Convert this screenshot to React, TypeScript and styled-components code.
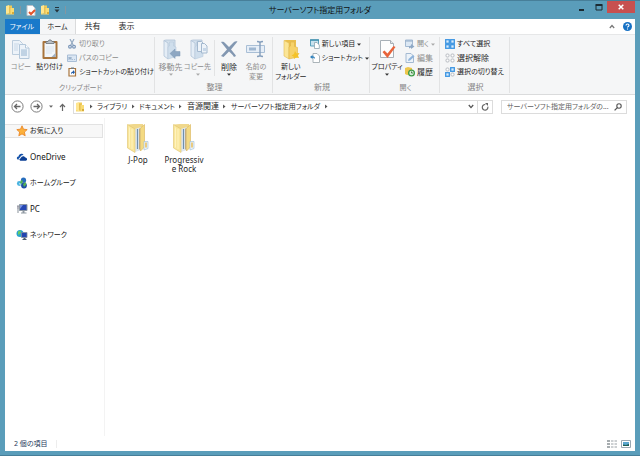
import React from "react";
import styled, { createGlobalStyle } from "styled-components";

const GlobalStyle = createGlobalStyle`
  * { box-sizing: border-box; }
  html, body, #root { height: 100%; }
  body {
    margin: 0;
    font-family: "Noto Sans", "Noto Sans CJK JP", sans-serif;
    font-size: 7px;
    line-height: 10px;
    color: #1f1f1f;
    font-feature-settings: "palt";
  }
  button, input { font: inherit; font-feature-settings: inherit; color: inherit; }
  button { border: 0; padding: 0; background: none; white-space: nowrap; }
  svg { display: block; flex: none; }
`;

const Frame = styled.div`
  display: flex;
  flex-direction: column;
  min-height: 100%;
  padding: 0 5px 4px;
  background: #5a9dba;
  border: 1px solid #477f99;
  border-width: 1px 0;
`;
const TitleBar = styled.header`
  display: grid;
  grid-template-columns: 1fr auto 1fr;
  align-items: start;
  height: 18px;
`;
const QuickAccess = styled.div`
  display: flex;
  align-items: center;
  gap: 4px;
  height: 18px;
`;
const QuickLine = styled.span`
  width: 1px;
  height: 8px;
  margin: 0 1px;
  background: #8496a0;
`;
const Title = styled.h1`
  margin: 0;
  font-size: 8px;
  line-height: 18px;
  font-weight: 400;
  color: #111;
`;
const WindowButtons = styled.div`
  display: flex;
  justify-content: flex-end;
`;
const WindowButton = styled.button<{ $close?: boolean }>`
  display: grid;
  place-items: center;
  width: ${(p) => (p.$close ? 28 : 17)}px;
  height: 12px;
  background: ${(p) => (p.$close ? "#c75050" : "transparent")};
`;
const Client = styled.div`
  display: flex;
  flex-direction: column;
  flex: 1;
  background: #fff;
`;
const TabRow = styled.nav`
  display: flex;
  align-items: stretch;
  height: 15px;
`;
const Tab = styled.button<{ $kind?: "file" | "active" }>`
  width: ${(p) => (p.$kind === "file" ? 35 : p.$kind === "active" ? 36 : 34)}px;
  color: ${(p) => (p.$kind === "file" ? "#fff" : "#1f1f1f")};
  background: ${(p) => (p.$kind === "file" ? "#1979ca" : p.$kind === "active" ? "#f5f6f7" : "#fff")};
  border-right: 1px solid ${(p) => (p.$kind === "active" ? "#dadbdc" : "transparent")};
`;
const TabTools = styled.div`
  display: flex;
  align-items: center;
  gap: 8px;
  margin-left: auto;
  padding-right: 3px;
`;
const Ribbon = styled.section`
  display: flex;
  height: 61px;
  padding: 2px 0 1px;
  background: #f5f6f7;
  border-top: 1px solid #e6e7e8;
  border-bottom: 1px solid #dadbdc;
`;
const GroupBox = styled.div<{ $width: number }>`
  display: flex;
  flex-direction: column;
  justify-content: space-between;
  width: ${(p) => p.$width}px;
  padding-left: 2px;
  border-right: 1px solid #e2e3e4;
`;
const GroupBody = styled.div`
  display: flex;
  align-items: flex-start;
`;
const GroupName = styled.div`
  text-align: center;
  color: #858585;
`;
const Label = styled.span<{ $kana: boolean }>`
  font-size: ${(p) => (p.$kana ? 7 : 8)}px;
`;
const BigButton = styled.button<{ $width: number; $off?: boolean }>`
  display: flex;
  flex-direction: column;
  align-items: center;
  gap: 1px;
  width: ${(p) => p.$width}px;
  padding-top: 2px;
  color: ${(p) => (p.$off ? "#8c8c8c" : "#1f1f1f")};
  white-space: pre;
`;
const InnerLine = styled.span`
  width: 1px;
  height: 36px;
  margin: 3px 0 0 3px;
  background: #e2e3e4;
`;
const SmallColumn = styled.div`
  display: flex;
  flex-direction: column;
  gap: 4px;
  padding: 2px 0 0 3px;
`;
const SmallButton = styled.button<{ $off?: boolean }>`
  display: flex;
  align-items: center;
  gap: 2px;
  height: 10px;
  color: ${(p) => (p.$off ? "#8c8c8c" : "#1f1f1f")};
`;
const AddressRow = styled.div`
  display: flex;
  align-items: center;
  height: 23px;
  padding: 0 8px 0 6px;
`;
const NavButtons = styled.div`
  display: flex;
  align-items: center;
  gap: 6px;
  width: 62px;
`;
const AddressBar = styled.div`
  display: flex;
  align-items: center;
  flex: 1;
  height: 14px;
  padding-left: 1px;
  border: 1px solid #dcdcdc;
`;
const Crumbs = styled.ol`
  display: flex;
  align-items: center;
  flex: 1;
  margin: 0;
  padding: 0;
  list-style: none;
`;
const Crumb = styled.li`
  display: flex;
  align-items: center;
`;
const CrumbArrow = styled.span`
  display: grid;
  place-items: center;
  width: 12px;
`;
const BarButton = styled.button<{ $line?: boolean }>`
  display: grid;
  place-items: center;
  width: ${(p) => (p.$line ? 15 : 12)}px;
  height: 12px;
  border-left: ${(p) => (p.$line ? "1px solid #dcdcdc" : "0")};
`;
const Search = styled.label`
  display: flex;
  align-items: center;
  width: 126px;
  height: 14px;
  margin-left: 8px;
  padding: 0 4px 0 5px;
  border: 1px solid #dcdcdc;
`;
const SearchInput = styled.input`
  flex: 1;
  min-width: 0;
  padding: 0;
  border: 0;
  outline: 0;
  background: none;
  &::placeholder { color: #606060; opacity: 1; }
`;
const Main = styled.div`
  display: flex;
  flex: 1;
`;
const Sidebar = styled.nav`
  display: flex;
  flex-direction: column;
  gap: 12px;
  width: 100px;
  padding: 6px 1px 0 0;
  border-right: 1px solid #f3f3f3;
`;
const Place = styled.a<{ $current?: boolean }>`
  display: flex;
  align-items: center;
  gap: 2px;
  height: 14px;
  padding-left: 11px;
  color: #141414;
  text-decoration: none;
  background: ${(p) => (p.$current ? "#f7f7f7" : "transparent")};
  border: 1px solid ${(p) => (p.$current ? "#e2e2e2" : "transparent")};
  border-left: 0;
`;
const Files = styled.main`
  display: flex;
  flex: 1;
  align-items: flex-start;
  gap: 6px;
  padding: 5px 13px;
`;
const FileItem = styled.button`
  display: flex;
  flex-direction: column;
  align-items: center;
  gap: 1px;
  width: 40px;
  font-size: 8px;
  line-height: 9px;
  white-space: normal;
  word-break: break-all;
`;
const StatusBar = styled.footer`
  display: flex;
  align-items: center;
  height: 15px;
  padding: 0 4px 0 9px;
  color: #1e395b;
`;
const StatusLine = styled.span`
  width: 1px;
  height: 8px;
  margin-left: 8px;
  background: #ededed;
`;
const ViewButtons = styled.div`
  display: flex;
  gap: 4px;
  margin-left: auto;
`;

const MiniFolder = () => (
  <svg width="10" height="10" viewBox="0 0 10 10" aria-hidden>
    <path d="M1 1l3-1v8l-3 1z" fill="#ffe690" />
    <path d="M4 0.5h3v8H4z" fill="#f0ca58" />
    <path d="M5 3h4v6.500H1V8l4 .5z" fill="#f9dc74" />
    <path d="M5 2v7" stroke="#d9b04a" strokeWidth=".7" />
    <path d="M7 7h2v2H7z" fill="#d7ab3d" />
  </svg>
);
const DocCheck = () => (
  <svg width="10" height="11" viewBox="0 0 10 11" aria-hidden>
    <path d="M1 .5h5.500L9 3v7.500H1z" fill="#fff" stroke="#b8c0c8" />
    <path d="M3 7l2 2 4-4" fill="none" stroke="#e2542c" strokeWidth="2" />
  </svg>
);
const Caret = ({ color = "#333" }: { color?: string }) => (
  <svg width="4" height="3" viewBox="0 0 4 3" aria-hidden>
    <path d="M0 .5h4L2 2.800z" fill={color} />
  </svg>
);
const QuickMenu = () => (
  <svg width="6" height="6" viewBox="0 0 6 6" aria-hidden>
    <path d="M1 .5h4" stroke="#25343c" />
    <path d="M.5 2.500h5L3 5.500z" fill="#25343c" />
  </svg>
);
const MinimizeIcon = () => (
  <svg width="7" height="7" viewBox="0 0 7 7" aria-hidden><path d="M1 6h5" stroke="#1b2a32" strokeWidth="2" /></svg>
);
const MaximizeIcon = () => (
  <svg width="8" height="7" viewBox="0 0 8 7" aria-hidden>
    <path d="M1 1.500h6v4.500H1z" fill="none" stroke="#1b2a32" /><path d="M.5 1h7" stroke="#1b2a32" strokeWidth="2" />
  </svg>
);
const CloseIcon = () => (
  <svg width="6" height="6" viewBox="0 0 6 6" aria-hidden><path d="M.7.7l4.600 4.600M5.300.7L.7 5.300" stroke="#fff" strokeWidth="1.500" /></svg>
);
const HelpIcon = () => (
  <svg width="9" height="9" viewBox="0 0 9 9" aria-hidden>
    <circle cx="4.500" cy="4.500" r="4.500" fill="#1671c4" />
    <path d="M3 3.500c0-2 3-2 3 0 0 1-1.500 1-1.500 2.100M4.500 6.500v1.100" fill="none" stroke="#fff" strokeWidth="1.100" />
  </svg>
);
const ChevronUp = () => (
  <svg width="6" height="5" viewBox="0 0 6 5" aria-hidden><path d="M.8 4L3 1.500 5.200 4" fill="none" stroke="#777" strokeWidth="1.200" /></svg>
);
const CopyIcon = () => (
  <svg width="20" height="22" viewBox="0 0 20 22" aria-hidden>
    <path d="M1.500 1.500h7l3 3v11h-10z" fill="#edf3f9" stroke="#bccddd" />
    <path d="M3 5h5M3 7h4M3 9h4M3 11h4" stroke="#c9d8e7" />
    <path d="M8.500 5.500h6l3.500 3.500v10.500H8.500z" fill="#edf3f9" stroke="#b3c7da" />
    <path d="M14.500 5.500V9H18" fill="#fff" stroke="#b3c7da" />
    <path d="M10 10h6v7h-6z" fill="#cbdbea" />
    <path d="M10 12h6M10 14h6M10 16h6" stroke="#b5cade" />
  </svg>
);
const PasteIcon = () => (
  <svg width="18" height="22" viewBox="0 0 18 22" aria-hidden>
    <rect x="1.500" y="2" width="15" height="18" rx="1" fill="#a8743c" />
    <path d="M3.500 4h11v14h-11z" fill="#f2f6fa" />
    <path d="M5 8h8M5 10h8M5 12h8M5 14h6" stroke="#dce5ee" />
    <path d="M14.500 14v4h-4z" fill="#9eb0c4" />
    <path d="M5 4.500V2.500h2l1-1.500h2l1 1.500h2v2z" fill="#b9c0c7" stroke="#6c747b" strokeWidth=".8" />
  </svg>
);
const CutIcon = () => (
  <svg width="10" height="10" viewBox="0 0 10 10" aria-hidden>
    <path d="M3 0l3.400 6.500M7 0L3.600 6.500" stroke="#93a9c1" strokeWidth="1.200" />
    <circle cx="3" cy="7.800" r="1.400" fill="none" stroke="#7c98ba" strokeWidth="1.200" />
    <circle cx="7" cy="7.800" r="1.400" fill="none" stroke="#7c98ba" strokeWidth="1.200" />
  </svg>
);
const PathIcon = () => (
  <svg width="10" height="10" viewBox="0 0 10 10" aria-hidden>
    <path d="M.5 2h9v6.500h-9z" fill="#dae6f3" stroke="#a9bed6" />
    <path d="M2 7V4l1 2 1-2v3M5.500 7v-.8M7.500 7v-.8" fill="none" stroke="#8da6c2" strokeWidth=".8" />
  </svg>
);
const ShortcutPasteIcon = () => (
  <svg width="10" height="10" viewBox="0 0 10 10" aria-hidden>
    <path d="M2 1.500h6.500V9H2z" fill="#fff" stroke="#a8743c" strokeWidth="1.200" />
    <path d="M4 .5h3v1.500H4z" fill="#737b82" />
    <path d="M4 7.500c0-2 .5-3 2-3V3l2 2.200-2 2V6C5 6 4.500 6.500 4 7.500z" fill="#1e5ba8" />
  </svg>
);
const PaleFolder = ({ kind }: { kind: "move" | "copy" }) => (
  <svg width="20" height="22" viewBox="0 0 20 22" aria-hidden>
    <path d="M3 1.500L5 1h9v15H7z" fill="#d2dfec" stroke="#b0c3d7" strokeWidth=".8" />
    <path d="M3 1.500L7 4v16l-4-3z" fill="#e4edf6" stroke="#b0c3d7" strokeWidth=".8" />
    <path d="M7 8l1.500-1V3h4v4l2.500 1v9.500L7 20z" fill="#cfdeec" stroke="#b9cbdd" strokeWidth=".6" />
    {kind === "move" ? (
      <path d="M9 14.500l5-4.500v2.500h5v4.500h-5v2.500z" fill="#8ea7c2" stroke="#7e98b5" strokeWidth=".5" />
    ) : (
      <>
        <path d="M9.500 2.500h4l2 2v8h-6z" fill="#edf3f9" stroke="#a4b9cf" />
        <path d="M13.500 4.500h3l2.500 2.500v7h-5.500z" fill="#edf3f9" stroke="#a4b9cf" />
        <path d="M15 9h3v3h-3z" fill="#c7d7e8" />
      </>
    )}
  </svg>
);
const DeleteIcon = () => (
  <svg width="20" height="22" viewBox="0 0 20 22" aria-hidden>
    <path d="M2 3c2-.5 3 0 4 1l4 4 5-5c1-.8 2-1 3.500-.6L12 10.500c2.500 3 4 4.500 5 6.500l-2 1c-1.500-2.500-3-4-5-5.500L4.500 18 2 17l6-6.500C6 8 4 5.500 2 3z" fill="#8297b1" />
  </svg>
);
const RenameIcon = () => (
  <svg width="20" height="22" viewBox="0 0 20 22" aria-hidden>
    <path d="M.5 6.500h18v7H.5z" fill="#e6eef7" stroke="#a9bfd6" />
    <path d="M3 8.500h7v3H3z" fill="#9fb7d1" />
    <path d="M11 2.500c2 0 2.500.3 3 1 .5-.7 1-1 3-1M11 17.500c2 0 2.500-.3 3-1 .5.7 1 1 3 1M14 3.500v13" fill="none" stroke="#859fbd" strokeWidth="1.400" />
  </svg>
);
const NewFolderIcon = () => (
  <svg width="20" height="22" viewBox="0 0 20 22" aria-hidden>
    <path d="M3 1.500L5 1h10v16H8z" fill="#eabf4e" />
    <path d="M3 1.500L8 4v16l-5-3z" fill="#fbe596" stroke="#e2bd56" strokeWidth=".6" />
    <path d="M8 8l1.500-1V3h4v4.500l3 1V18L8 20z" fill="#f6d269" stroke="#dfb346" strokeWidth=".6" />
    <path d="M14 12l1.500 2.500 3-.5-1.500 2.500 1 2.500-3-.5-2 1.500-.5-2.500-2-1 2.500-1.500z" fill="#f3c229" />
  </svg>
);
const NewItemIcon = () => (
  <svg width="10" height="10" viewBox="0 0 10 10" aria-hidden>
    <path d="M.5 1h8v6h-8z" fill="#c8e2ee" stroke="#5aa1bd" />
    <path d="M0 1h9" stroke="#3d8fad" strokeWidth="1.400" />
    <path d="M4.500 3.500H7L9.300 6v3.500H4.500z" fill="#fff" stroke="#8da3ae" strokeWidth=".8" />
  </svg>
);
const NewShortcutIcon = () => (
  <svg width="10" height="10" viewBox="0 0 10 10" aria-hidden>
    <path d="M3 .5h4L9.500 3v6.500H3z" fill="#fff" stroke="#98a3aa" strokeWidth=".8" />
    <path d="M0 4l2.500-2v1.200C4.500 3.200 5 4.500 5 6c-.6-.8-1.200-1.200-2.500-1.200V6z" fill="#2c81be" />
  </svg>
);
const PropertiesIcon = () => (
  <svg width="20" height="22" viewBox="0 0 20 22" aria-hidden>
    <path d="M3.500 1.500h10l3 3v14h-13z" fill="#fdfdfd" stroke="#a8b0b7" />
    <path d="M13.500 1.500v3h3" fill="#e6eaed" stroke="#a8b0b7" />
    <path d="M5.500 13l2-1.500 3 3L16.500 7l2 1-8 11z" fill="#e8643b" />
  </svg>
);
const OpenIcon = () => (
  <svg width="10" height="10" viewBox="0 0 10 10" aria-hidden>
    <path d="M.5 1h7v6.500h-7z" fill="#dce8f4" stroke="#a4bad2" />
    <path d="M.5 2h7" stroke="#8fa9c6" />
    <path d="M4 9.500V7.500l2-1V5l3.500 2.500L6 10V8.500z" fill="#8fa9c6" />
  </svg>
);
const EditIcon = () => (
  <svg width="10" height="10" viewBox="0 0 10 10" aria-hidden>
    <path d="M1 .5h5L8.500 3v6.500H1z" fill="#edf3f9" stroke="#a4bad2" />
    <path d="M3 8l.5-2L8 2l1.500 1.500-4.500 4z" fill="#8fb4db" />
  </svg>
);
const HistoryIcon = () => (
  <svg width="10" height="10" viewBox="0 0 10 10" aria-hidden>
    <path d="M0 1l3-1 4 1v6L2 8 0 7z" fill="#edc64c" />
    <circle cx="6.500" cy="6" r="3.500" fill="#3c9b46" />
    <circle cx="6.500" cy="6" r="2.200" fill="#d9efdb" />
    <path d="M6.500 4.500V6H8" fill="none" stroke="#28662e" strokeWidth=".8" />
  </svg>
);
const GridIcon = ({ fills }: { fills: boolean[] }) => (
  <svg width="10" height="10" viewBox="0 0 10 10" aria-hidden>
    {fills.map((on, i) => {
      const x = (i % 2) * 5;
      const y = Math.floor(i / 2) * 5;
      return on ? (
        <rect key={i} x={x + 0.7} y={y + 0.7} width="3.600" height="3.600" fill="#d8ecfd" stroke="#3d95e2" strokeWidth="1.300" />
      ) : (
        <rect key={i} x={x + 1} y={y + 1} width="3" height="3" rx="1" fill="#fff" stroke="#a9afb5" strokeWidth=".8" />
      );
    })}
  </svg>
);
const RoundArrow = ({ flip }: { flip?: boolean }) => (
  <svg width="13" height="13" viewBox="0 0 13 13" aria-hidden>
    <circle cx="6.500" cy="6.500" r="5.600" fill="#fff" stroke="#7c7c7c" />
    <path d={flip ? "M3.500 6.500h6M7 4l2.500 2.500L7 9" : "M9.500 6.500h-6M6 4L3.500 6.500 6 9"} fill="none" stroke="#666" strokeWidth="1.300" />
  </svg>
);
const UpArrow = () => (
  <svg width="7" height="8" viewBox="0 0 7 8" aria-hidden><path d="M3.500 8V1.500M1 4l2.500-2.700L6 4" fill="none" stroke="#666" strokeWidth="1.200" /></svg>
);
const RightArrow = () => (
  <svg width="3" height="5" viewBox="0 0 3 5" aria-hidden><path d="M0 .5v4l2.500-2z" fill="#555" /></svg>
);
const ChevronDown = () => (
  <svg width="6" height="5" viewBox="0 0 6 5" aria-hidden><path d="M.8 1L3 3.600 5.200 1" fill="none" stroke="#555" strokeWidth="1.300" /></svg>
);
const RefreshIcon = () => (
  <svg width="8" height="8" viewBox="0 0 8 8" aria-hidden>
    <path d="M6.800 3.600A2.800 2.800 0 1 1 4.300 1.500" fill="none" stroke="#666" strokeWidth="1.200" />
    <path d="M4 0h3v3z" fill="#666" />
  </svg>
);
const SearchIcon = () => (
  <svg width="8" height="8" viewBox="0 0 8 8" aria-hidden>
    <circle cx="5" cy="3" r="2.200" fill="none" stroke="#555" strokeWidth="1.100" /><path d="M3.400 4.600L.6 7.400" stroke="#555" strokeWidth="1.300" />
  </svg>
);
const StarIcon = () => (
  <svg width="12" height="12" viewBox="0 0 12 12" aria-hidden>
    <path d="M6 .8l1.500 3.400 3.700.4-2.800 2.500.8 3.700L6 8.900l-3.200 1.900.8-3.700L.8 4.600l3.700-.4z" fill="#fbb03b" stroke="#e97f1d" strokeWidth=".8" />
  </svg>
);
const CloudIcon = () => (
  <svg width="12" height="12" viewBox="0 0 12 12" aria-hidden>
    <path d="M1.500 8.500C.2 7 1 5.500 2.500 5.500 3 2.500 6.500 2 7.500 4 5 4 4.300 5.500 4.200 6.600c-1.300.2-1.700 1-1.300 1.900z" fill="#1250a8" />
    <path d="M4.300 9.800C2.800 9 3.300 7.400 4.900 7.300c.2-2.400 3.500-2.700 4.200-.7 1.800-.1 2.900 2.500.9 3.200z" fill="#0b3f95" />
  </svg>
);
const HomegroupIcon = () => (
  <svg width="12" height="12" viewBox="0 0 12 12" aria-hidden>
    <circle cx="7.500" cy="3.200" r="2.600" fill="#276dbd" />
    <circle cx="3.300" cy="6.500" r="2.400" fill="#4bb4e0" />
    <circle cx="8" cy="8.500" r="2.900" fill="#1e4fa5" />
    <path d="M5 3l2 1-1 3-2-1zM7 7l3-2v3l-2 2z" fill="#54b254" />
    <path d="M3 6l2 1-1 1z" fill="#fff" />
  </svg>
);
const PcIcon = () => (
  <svg width="12" height="12" viewBox="0 0 12 12" aria-hidden>
    <path d="M1 2h2v8H1z" fill="#c3c8cc" /><path d="M1.500 3.500h1M1.500 5h1" stroke="#546" strokeWidth=".6" />
    <path d="M3.500 1.500h7.500v6H3.500z" fill="#2647b4" stroke="#8e99a5" />
    <path d="M4 2h3L4 6z" fill="#7893e2" /><path d="M6.500 8h2v1.500h2v1H5v-1h1.500z" fill="#9099a2" />
  </svg>
);
const NetworkIcon = () => (
  <svg width="12" height="12" viewBox="0 0 12 12" aria-hidden>
    <circle cx="4" cy="4.500" r="3.500" fill="#27a3cf" />
    <path d="M2 2.500l3-1-.5 3L2 6z" fill="#6bcb61" />
    <path d="M5.500 3.500H11v5H5.500z" fill="#2145b1" stroke="#7f8d9c" strokeWidth=".8" />
    <path d="M7.500 9h2v1h1v1H6.500v-1h1z" fill="#4a5c70" />
  </svg>
);
const MusicFolder = () => (
  <svg width="24" height="31" viewBox="0 0 24 31" aria-hidden>
    <path d="M2 1.500L8 1h9v22H8z" fill="#f0d88c" />
    <path d="M9 6l6-2v23l-6 2z" fill="#dfe8ef" />
    <path d="M11.500 6v20" stroke="#6f8fac" strokeWidth="1.200" />
    <path d="M13.500 5.500v21" stroke="#bb9d62" strokeWidth=".8" />
    <path d="M14.500 5l4-3.500V24l-4 4z" fill="#f4da82" stroke="#d8b457" strokeWidth=".6" />
    <path d="M1.500 1.500L9 6v23.500L1.500 25z" fill="#f9e69b" stroke="#dfc26b" strokeWidth=".6" />
    <path d="M3.500 4.500v20M6 6v20" stroke="#fff3bd" />
    <path d="M18 18.500h4v7l-4 1.500z" fill="#edf4fa" stroke="#9dbdd6" strokeWidth=".6" />
    <path d="M20 19.500v5" stroke="#e8b94c" strokeWidth="1.400" />
  </svg>
);
const ListViewIcon = () => (
  <svg width="10" height="8" viewBox="0 0 10 8" aria-hidden>
    <path d="M0 1h3M0 4h3M0 7h3" stroke="#8a9297" strokeWidth="1.600" />
    <path d="M4 1h2.500M4 4h2.500M4 7h2.500M7.500 1H10M7.500 4H10M7.500 7H10" stroke="#9aa1a6" />
  </svg>
);
const ThumbViewIcon = () => (
  <svg width="10" height="8" viewBox="0 0 10 8" aria-hidden>
    <path d="M.5.5h9v7h-9z" fill="#fff" stroke="#9aa7b1" />
    <path d="M2 2h6v4H2z" fill="#5aa6cf" /><path d="M2 6V4.500l3 .5 3-1v2z" fill="#1d5e54" />
  </svg>
);

const places = [
  { name: "お気に入り", icon: <StarIcon />, current: true },
  { name: "OneDrive", icon: <CloudIcon /> },
  { name: "ホームグループ", icon: <HomegroupIcon /> },
  { name: "PC", icon: <PcIcon /> },
  { name: "ネットワーク", icon: <NetworkIcon /> },
];
const crumbs = ["ライブラリ", "ドキュメント", "音源関連", "サーバーソフト指定用フォルダ"];
const folders = ["J-Pop", "Progressive Rock"];

const Text = ({ children }: { children: string }) => (
  <Label $kana={/[\u3040-\u30ff]/.test(children)}>{children}</Label>
);

const Group = ({ name, width, children }: { name: string; width: number; children: React.ReactNode }) => (
  <GroupBox $width={width} role="group" aria-label={name}>
    <GroupBody>{children}</GroupBody>
    <GroupName><Text>{name}</Text></GroupName>
  </GroupBox>
);

const Big = ({ label, icon, width, off, menu }: { label: string; icon: React.ReactNode; width: number; off?: boolean; menu?: boolean }) => (
  <BigButton $width={width} $off={off} disabled={off}>
    {icon}
    <Text>{label}</Text>
    {menu && <Caret color={off ? "#aaa" : "#333"} />}
  </BigButton>
);

const Small = ({ label, icon, off, menu }: { label: string; icon: React.ReactNode; off?: boolean; menu?: boolean }) => (
  <SmallButton $off={off} disabled={off}>
    {icon}
    <Text>{label}</Text>
    {menu && <Caret color={off ? "#aaa" : "#333"} />}
  </SmallButton>
);

export default function App() {
  return (
    <>
      <GlobalStyle />
      <Frame>
        <TitleBar>
          <QuickAccess>
            <MiniFolder />
            <QuickLine />
            <DocCheck />
            <MiniFolder />
            <QuickMenu />
            <QuickLine />
          </QuickAccess>
          <Title>サーバーソフト指定用フォルダ</Title>
          <WindowButtons>
            <WindowButton aria-label="最小化"><MinimizeIcon /></WindowButton>
            <WindowButton aria-label="最大化"><MaximizeIcon /></WindowButton>
            <WindowButton $close aria-label="閉じる"><CloseIcon /></WindowButton>
          </WindowButtons>
        </TitleBar>
        <Client>
          <TabRow>
            <Tab $kind="file"><Text>ファイル</Text></Tab>
            <Tab $kind="active"><Text>ホーム</Text></Tab>
            <Tab><Text>共有</Text></Tab>
            <Tab><Text>表示</Text></Tab>
            <TabTools>
              <button aria-label="リボンの最小化"><ChevronUp /></button>
              <button aria-label="ヘルプ"><HelpIcon /></button>
            </TabTools>
          </TabRow>
          <Ribbon>
            <Group name="クリップボード" width={150}>
              <Big label="コピー" icon={<CopyIcon />} width={28} off />
              <Big label="貼り付け" icon={<PasteIcon />} width={29} />
              <SmallColumn>
                <Small label="切り取り" icon={<CutIcon />} off />
                <Small label="パスのコピー" icon={<PathIcon />} off />
                <Small label="ショートカットの貼り付け" icon={<ShortcutPasteIcon />} />
              </SmallColumn>
            </Group>
            <Group name="整理" width={118}>
              <Big label="移動先" icon={<PaleFolder kind="move" />} width={27} off menu />
              <Big label="コピー先" icon={<PaleFolder kind="copy" />} width={27} off menu />
              <InnerLine />
              <Big label="削除" icon={<DeleteIcon />} width={28} menu />
              <Big label={"名前の\n変更"} icon={<RenameIcon />} width={26} off />
            </Group>
            <Group name="新規" width={97}>
              <Big label={"新しい\nフォルダー"} icon={<NewFolderIcon />} width={32} />
              <SmallColumn>
                <Small label="新しい項目" icon={<NewItemIcon />} menu />
                <Small label="ショートカット" icon={<NewShortcutIcon />} menu />
              </SmallColumn>
            </Group>
            <Group name="開く" width={70}>
              <Big label="プロパティ" icon={<PropertiesIcon />} width={30} menu />
              <SmallColumn>
                <Small label="開く" icon={<OpenIcon />} off menu />
                <Small label="編集" icon={<EditIcon />} off />
                <Small label="履歴" icon={<HistoryIcon />} />
              </SmallColumn>
            </Group>
            <Group name="選択" width={70}>
              <SmallColumn>
                <Small label="すべて選択" icon={<GridIcon fills={[true, true, true, true]} />} />
                <Small label="選択解除" icon={<GridIcon fills={[false, false, false, false]} />} />
                <Small label="選択の切り替え" icon={<GridIcon fills={[false, true, true, false]} />} />
              </SmallColumn>
            </Group>
          </Ribbon>
          <AddressRow>
            <NavButtons>
              <button aria-label="戻る"><RoundArrow /></button>
              <button aria-label="進む"><RoundArrow flip /></button>
              <button aria-label="最近表示した場所"><Caret color="#666" /></button>
              <button aria-label="上へ"><UpArrow /></button>
            </NavButtons>
            <AddressBar>
              <MiniFolder />
              <Crumbs>
                <CrumbArrow><RightArrow /></CrumbArrow>
                {crumbs.map((name) => (
                  <Crumb key={name}>
                    <button><Text>{name}</Text></button>
                    <CrumbArrow><RightArrow /></CrumbArrow>
                  </Crumb>
                ))}
              </Crumbs>
              <BarButton aria-label="履歴を表示"><ChevronDown /></BarButton>
              <BarButton $line aria-label="更新"><RefreshIcon /></BarButton>
            </AddressBar>
            <Search>
              <SearchInput aria-label="検索" placeholder="サーバーソフト指定用フォルダの..." />
              <SearchIcon />
            </Search>
          </AddressRow>
          <Main>
            <Sidebar>
              {places.map((p) => (
                <Place key={p.name} href="#" $current={p.current}>
                  {p.icon}
                  <Text>{p.name}</Text>
                </Place>
              ))}
            </Sidebar>
            <Files>
              {folders.map((name) => (
                <FileItem key={name}>
                  <MusicFolder />
                  <span>{name}</span>
                </FileItem>
              ))}
            </Files>
          </Main>
          <StatusBar>
            <Text>2 個の項目</Text>
            <StatusLine />
            <ViewButtons>
              <button aria-label="詳細表示"><ListViewIcon /></button>
              <button aria-label="縮小表示"><ThumbViewIcon /></button>
            </ViewButtons>
          </StatusBar>
        </Client>
      </Frame>
    </>
  );
}
